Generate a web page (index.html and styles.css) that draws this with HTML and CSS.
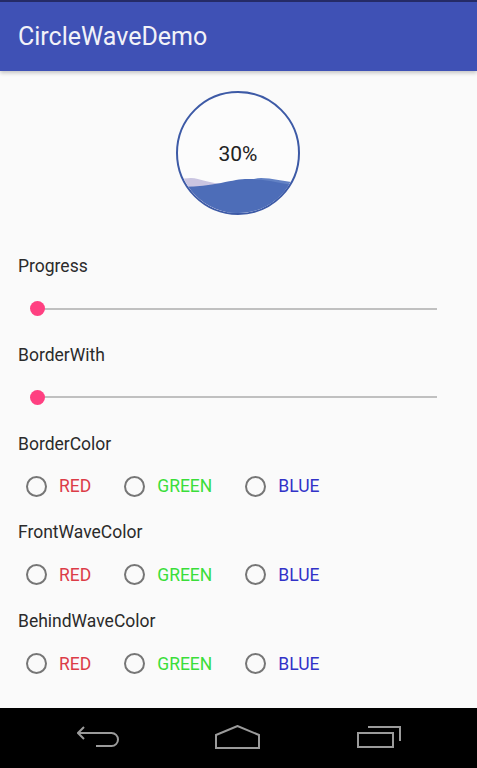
FILE: index.html
```html
<!DOCTYPE html>
<html>
<head>
<meta charset="utf-8">
<link rel="stylesheet" href="styles.css">
</head>
<body>
<div class="screen">
  <header class="appbar"><span class="title">CircleWaveDemo</span></header>
  <main class="content">
    <div class="wave-wrap">
      <div class="wave-circle">
        <svg class="wave-svg" width="120" height="120" viewBox="2 2 120 120">
          <defs>
            <clipPath id="c"><circle cx="62" cy="62" r="60"/></clipPath>
            <linearGradient id="bg" x1="0" y1="0" x2="124" y2="0" gradientUnits="userSpaceOnUse">
              <stop offset="0.42" stop-color="#cac5e1"/>
              <stop offset="0.42" stop-color="#6281c4"/>
            </linearGradient>
          </defs>
          <g clip-path="url(#c)">
            <path fill="url(#bg)" d="M0 89.9 C5 88 10 87 15 87 C24 87 33 93 50 93 C67 93 76 87 85 87 C96 87 110 91 124 92 L124 130 L0 130 Z"/>
            <path fill="#4d6db8" d="M0 95.6 C15 96.5 30 95 45 92 C57 89.5 64 88 72 88 C85 88 100 91 113 93.5 C118 94.3 121 95 124 95.5 L124 130 L0 130 Z"/>
          </g>
        </svg>
        <span class="pct">30%</span>
      </div>
    </div>

    <section class="section">
      <div class="label">Progress</div>
      <div class="row"><div class="slider"><span class="thumb"></span></div></div>
    </section>
    <section class="section">
      <div class="label">BorderWith</div>
      <div class="row"><div class="slider"><span class="thumb"></span></div></div>
    </section>
    <section class="section">
      <div class="label">BorderColor</div>
      <div class="row radios">
        <span class="radio"><span class="dot"></span><span class="red">RED</span></span>
        <span class="radio"><span class="dot"></span><span class="green">GREEN</span></span>
        <span class="radio"><span class="dot"></span><span class="blue">BLUE</span></span>
      </div>
    </section>
    <section class="section">
      <div class="label">FrontWaveColor</div>
      <div class="row radios">
        <span class="radio"><span class="dot"></span><span class="red">RED</span></span>
        <span class="radio"><span class="dot"></span><span class="green">GREEN</span></span>
        <span class="radio"><span class="dot"></span><span class="blue">BLUE</span></span>
      </div>
    </section>
    <section class="section">
      <div class="label">BehindWaveColor</div>
      <div class="row radios">
        <span class="radio"><span class="dot"></span><span class="red">RED</span></span>
        <span class="radio"><span class="dot"></span><span class="green">GREEN</span></span>
        <span class="radio"><span class="dot"></span><span class="blue">BLUE</span></span>
      </div>
    </section>
  </main>
  <nav class="navbar">
    <svg class="nav-icon" width="42" height="24" viewBox="0 0 42 24">
      <path d="M7 2 L1 8 L7 14 M1 8 H34.5 A6.5 6.5 0 0 1 34.5 21 H19" fill="none" stroke="#9b9b9b" stroke-width="2"/>
    </svg>
    <svg class="nav-icon" width="45" height="24" viewBox="0 0 45 24">
      <polygon points="1,23 1,10 22.5,1 44,10 44,23" fill="none" stroke="#9b9b9b" stroke-width="2"/>
    </svg>
    <svg class="nav-icon" width="44" height="22" viewBox="0 0 44 22">
      <rect x="1" y="7" width="35" height="14" fill="none" stroke="#9b9b9b" stroke-width="2"/>
      <path d="M11 1 H43 V15" fill="none" stroke="#9b9b9b" stroke-width="2"/>
    </svg>
  </nav>
</div>
</body>
</html>
```
FILE: styles.css
```css
* { box-sizing: border-box; }
html, body { margin: 0; padding: 0; }
body {
  background: #fafafa;
  font-family: Roboto, "Noto Sans", sans-serif;
  color: #2b2b2b;
}
.screen {
  height: 768px;
  display: flex;
  flex-direction: column;
}
.appbar {
  height: 71px;
  flex: none;
  background: #3f51b5;
  border-top: 2px solid #252b66;
  display: flex;
  align-items: center;
  padding-left: 18px;
  box-shadow: 0 2px 4px rgba(0,0,0,0.22);
  position: relative;
  z-index: 1;
}
.title {
  color: #f2f2f8;
  font-size: 25px;
}
.content {
  flex: 1;
  padding: 0 18px;
}
.wave-wrap {
  display: flex;
  justify-content: center;
  padding-top: 20px;
  padding-bottom: 41px;
  padding-right: 1px;
}
.wave-circle {
  width: 124px;
  height: 124px;
  border: 2px solid #3d5aa6;
  border-radius: 50%;
  background: #fcfcfc;
  position: relative;
  display: flex;
  align-items: center;
  justify-content: center;
}
.wave-svg {
  position: absolute;
  left: 0;
  top: 0;
}
.pct {
  position: relative;
  font-size: 21px;
  color: #222;
  margin-top: 2px;
}
.section {
  height: 88.75px;
}
.label {
  height: 20px;
  line-height: 20px;
  font-size: 17.5px;
  color: #2b2b2b;
}
.row {
  height: 68.75px;
  padding-bottom: 3.5px;
  display: flex;
  align-items: center;
}
.slider {
  position: relative;
  margin-left: 19.5px;
  width: 399px;
  height: 2px;
  background: #c0c0c0;
}
.thumb {
  position: absolute;
  left: -7.5px;
  top: -6.5px;
  width: 15px;
  height: 15px;
  border-radius: 50%;
  background: #ff4081;
}
.radios {
  gap: 25px;
}
.radio {
  display: inline-flex;
  align-items: center;
  font-size: 17.5px;
}
.dot {
  width: 21px;
  height: 21px;
  border: 2px solid #767676;
  border-radius: 50%;
  margin-left: 8px;
  margin-right: 12px;
}
.red { color: #dc3c48; }
.green { color: #3ade3a; }
.blue { color: #3232c8; }
.navbar {
  height: 60px;
  flex: none;
  background: #000;
  display: flex;
  justify-content: center;
  align-items: center;
  gap: 96.5px;
  padding-bottom: 3px;
}
.nav-icon { display: block; }
```
